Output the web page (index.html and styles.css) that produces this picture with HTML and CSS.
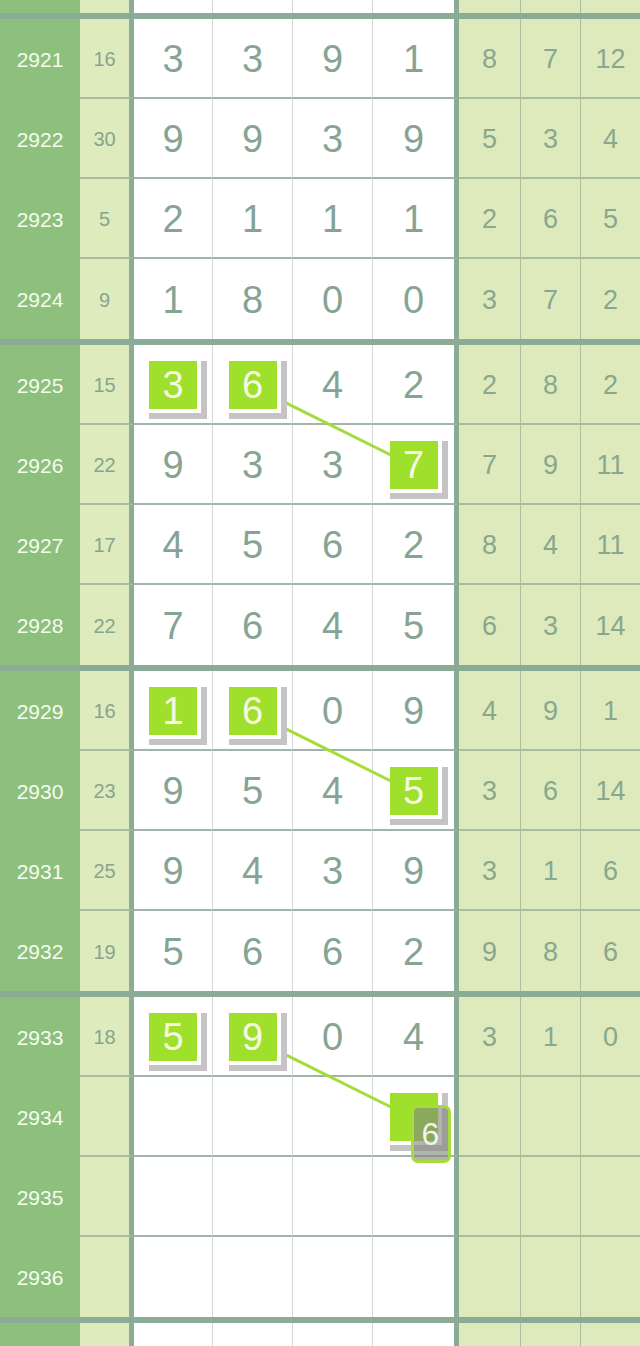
FILE: index.html
```html
<!DOCTYPE html>
<html lang="zh">
<head>
    <meta charset="UTF-8">
    <meta name="viewport" content="width=device-width, initial-scale=1.0">
    <title>走势图</title>
    <link rel="stylesheet" href="styles.css">
</head>
<body>
<div class="chart">

    <!-- 上一组の最後の行（下端だけ見える） -->
    <div class="row cut">
        <div class="c-qi"></div><div class="c-he"></div>
        <div class="c-d"></div><div class="c-d"></div><div class="c-d"></div><div class="c-d last"></div>
        <div class="c-r"></div><div class="c-r"></div><div class="c-r"></div>
    </div>

    <!-- 2921 - 2924 -->
    <div class="group">
        <div class="row">
            <div class="c-qi">2921</div><div class="c-he">16</div>
            <div class="c-d">3</div><div class="c-d">3</div><div class="c-d">9</div><div class="c-d last">1</div>
            <div class="c-r">8</div><div class="c-r">7</div><div class="c-r">12</div>
        </div>
        <div class="row">
            <div class="c-qi">2922</div><div class="c-he">30</div>
            <div class="c-d">9</div><div class="c-d">9</div><div class="c-d">3</div><div class="c-d last">9</div>
            <div class="c-r">5</div><div class="c-r">3</div><div class="c-r">4</div>
        </div>
        <div class="row">
            <div class="c-qi">2923</div><div class="c-he">5</div>
            <div class="c-d">2</div><div class="c-d">1</div><div class="c-d">1</div><div class="c-d last">1</div>
            <div class="c-r">2</div><div class="c-r">6</div><div class="c-r">5</div>
        </div>
        <div class="row">
            <div class="c-qi">2924</div><div class="c-he">9</div>
            <div class="c-d">1</div><div class="c-d">8</div><div class="c-d">0</div><div class="c-d last">0</div>
            <div class="c-r">3</div><div class="c-r">7</div><div class="c-r">2</div>
        </div>
    </div>

    <!-- 2925 - 2928 -->
    <div class="group">
        <svg class="links" width="640" height="320">
            <line x1="252" y1="41" x2="413" y2="121" />
        </svg>
        <div class="row">
            <div class="c-qi">2925</div><div class="c-he">15</div>
            <div class="c-d"><span class="ball">3</span></div><div class="c-d"><span class="ball">6</span></div><div class="c-d">4</div><div class="c-d last">2</div>
            <div class="c-r">2</div><div class="c-r">8</div><div class="c-r">2</div>
        </div>
        <div class="row">
            <div class="c-qi">2926</div><div class="c-he">22</div>
            <div class="c-d">9</div><div class="c-d">3</div><div class="c-d">3</div><div class="c-d last"><span class="ball">7</span></div>
            <div class="c-r">7</div><div class="c-r">9</div><div class="c-r">11</div>
        </div>
        <div class="row">
            <div class="c-qi">2927</div><div class="c-he">17</div>
            <div class="c-d">4</div><div class="c-d">5</div><div class="c-d">6</div><div class="c-d last">2</div>
            <div class="c-r">8</div><div class="c-r">4</div><div class="c-r">11</div>
        </div>
        <div class="row">
            <div class="c-qi">2928</div><div class="c-he">22</div>
            <div class="c-d">7</div><div class="c-d">6</div><div class="c-d">4</div><div class="c-d last">5</div>
            <div class="c-r">6</div><div class="c-r">3</div><div class="c-r">14</div>
        </div>
    </div>

    <!-- 2929 - 2932 -->
    <div class="group">
        <svg class="links" width="640" height="320">
            <line x1="252" y1="41" x2="413" y2="121" />
        </svg>
        <div class="row">
            <div class="c-qi">2929</div><div class="c-he">16</div>
            <div class="c-d"><span class="ball">1</span></div><div class="c-d"><span class="ball">6</span></div><div class="c-d">0</div><div class="c-d last">9</div>
            <div class="c-r">4</div><div class="c-r">9</div><div class="c-r">1</div>
        </div>
        <div class="row">
            <div class="c-qi">2930</div><div class="c-he">23</div>
            <div class="c-d">9</div><div class="c-d">5</div><div class="c-d">4</div><div class="c-d last"><span class="ball">5</span></div>
            <div class="c-r">3</div><div class="c-r">6</div><div class="c-r">14</div>
        </div>
        <div class="row">
            <div class="c-qi">2931</div><div class="c-he">25</div>
            <div class="c-d">9</div><div class="c-d">4</div><div class="c-d">3</div><div class="c-d last">9</div>
            <div class="c-r">3</div><div class="c-r">1</div><div class="c-r">6</div>
        </div>
        <div class="row">
            <div class="c-qi">2932</div><div class="c-he">19</div>
            <div class="c-d">5</div><div class="c-d">6</div><div class="c-d">6</div><div class="c-d last">2</div>
            <div class="c-r">9</div><div class="c-r">8</div><div class="c-r">6</div>
        </div>
    </div>

    <!-- 2933 - 2936 -->
    <div class="group">
        <svg class="links" width="640" height="320">
            <line x1="252" y1="41" x2="413" y2="121" />
        </svg>
        <div class="row">
            <div class="c-qi">2933</div><div class="c-he">18</div>
            <div class="c-d"><span class="ball">5</span></div><div class="c-d"><span class="ball">9</span></div><div class="c-d">0</div><div class="c-d last">4</div>
            <div class="c-r">3</div><div class="c-r">1</div><div class="c-r">0</div>
        </div>
        <div class="row">
            <div class="c-qi">2934</div><div class="c-he"></div>
            <div class="c-d"></div><div class="c-d"></div><div class="c-d"></div>
            <div class="c-d last"><span class="ball"><span class="guess">6</span></span></div>
            <div class="c-r"></div><div class="c-r"></div><div class="c-r"></div>
        </div>
        <div class="row">
            <div class="c-qi">2935</div><div class="c-he"></div>
            <div class="c-d"></div><div class="c-d"></div><div class="c-d"></div><div class="c-d last"></div>
            <div class="c-r"></div><div class="c-r"></div><div class="c-r"></div>
        </div>
        <div class="row">
            <div class="c-qi">2936</div><div class="c-he"></div>
            <div class="c-d"></div><div class="c-d"></div><div class="c-d"></div><div class="c-d last"></div>
            <div class="c-r"></div><div class="c-r"></div><div class="c-r"></div>
        </div>
    </div>

    <!-- 次のグループ（上端だけ見える） -->
    <div class="group">
        <div class="row cut end">
            <div class="c-qi"></div><div class="c-he"></div>
            <div class="c-d"></div><div class="c-d"></div><div class="c-d"></div><div class="c-d last"></div>
            <div class="c-r"></div><div class="c-r"></div><div class="c-r"></div>
        </div>
    </div>

</div>
</body>
</html>
```

FILE: styles.css
```css
/* ページ全体 */
body {
    margin: 0;
    background-color: #ffffff;
    font-family: "Liberation Sans", Arial, "Noto Sans CJK SC", sans-serif;
}

.chart {
    width: 640px;
}

/* 4行ごとのグループ（上に太い線） */
.group {
    position: relative;
    border-top: 6px solid #8aab96;
}

.row {
    display: grid;
    grid-template-columns: 80px 54px 78px 80px 80px 87px 61px 60px 60px;
    height: 80px;
}

.row.cut {
    height: 13px;
}

.row.cut.end {
    height: 23px;
}

.row > div {
    box-sizing: border-box;
    display: flex;
    align-items: center;
    justify-content: center;
    padding-top: 2px;
}

/* 期号 */
.c-qi {
    background-color: #8cc07c;
    color: #f6faef;
    font-size: 21px;
}

/* 和値 */
.c-he {
    background-color: #deebbd;
    color: #87a48f;
    font-size: 20px;
    border-right: 5px solid #8aab96;
}

/* 開奖号码 */
.c-d {
    background-color: #ffffff;
    color: #86a494;
    font-size: 38px;
}

.c-d + .c-d {
    border-left: 1px solid #d3d7d5;
}

.c-d.last {
    border-right: 5px solid #8aab96;
}

/* 右側の分布 */
.c-r {
    background-color: #dfeabc;
    color: #88a78f;
    font-size: 27px;
}

.c-r + .c-r {
    border-left: 1px solid #a9c09f;
}

/* 行の区切り線 */
.group .row:not(:last-of-type) .c-he,
.group .row:not(:last-of-type) .c-r {
    border-bottom: 2px solid #a6bd9f;
}

.group .row:not(:last-of-type) .c-d {
    border-bottom: 2px solid #a2b4a9;
}

/* 連線 */
.links {
    position: absolute;
    top: 0;
    left: 0;
    z-index: 1;
    pointer-events: none;
}

.links line {
    stroke: #a5dc3a;
    stroke-width: 3;
}

/* 当たり番号 */
.ball {
    position: relative;
    z-index: 2;
    width: 48px;
    height: 48px;
    line-height: 48px;
    text-align: center;
    background-color: #9ee02b;
    color: #f6f8e2;
    box-shadow: 2px 2px 0 2px #ffffff, 5px 5px 0 5px #c4c4c4;
}

.guess {
    position: absolute;
    left: 21px;
    top: 12px;
    width: 40px;
    height: 58px;
    box-sizing: border-box;
    border: 3px solid #a8dc3c;
    border-radius: 7px;
    background-color: rgba(128, 134, 122, 0.62);
    color: #f2f2f2;
    font-size: 32px;
    line-height: 52px;
    text-align: center;
}
```
